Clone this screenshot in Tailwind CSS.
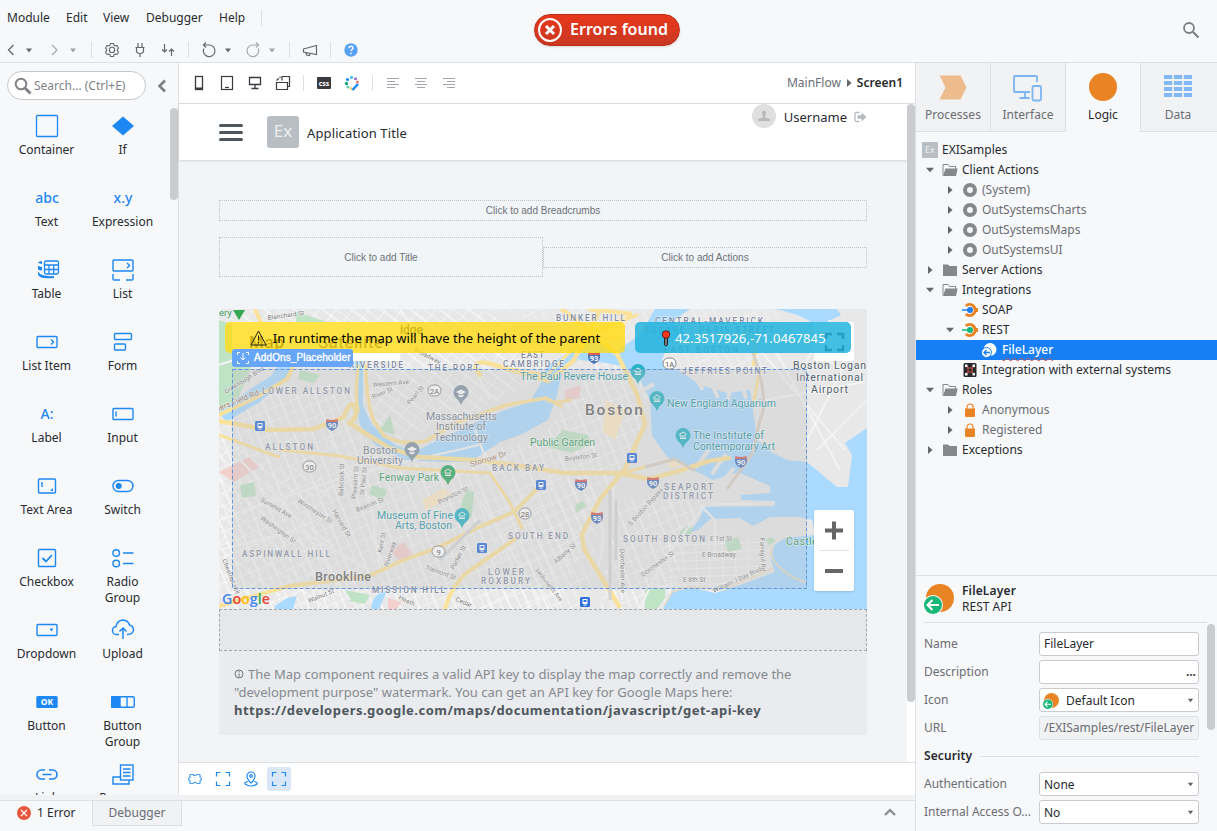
<!DOCTYPE html>
<html lang="en">
<head>
<meta charset="utf-8">
<title>EXISamples</title>
<script src="https://cdn.jsdelivr.net/npm/@tailwindcss/browser@4"></script>
</head>
<body class="bg-[#f7f8fa] font-['Noto_Sans',sans-serif] text-[12px] leading-4 text-[#272b30] overflow-hidden">
<svg class="hidden">
  <symbol id="caret" viewBox="0 0 8 5"><path d="M1 .5h6L4 4.500z" fill="currentColor"/></symbol>
  <symbol id="tri-r" viewBox="0 0 6 8"><path d="M1 0v8l4.500-4z" fill="#63666c"/></symbol>
  <symbol id="tri-d" viewBox="0 0 8 6"><path d="M0 .7h8L4 5.200z" fill="#63666c"/></symbol>
  <symbol id="folder-open" viewBox="0 0 16 14"><path d="M1 12.500V1.500h5l1.500 2H13.500V6" fill="none" stroke="#85878b"/><path d="M1 13 3.500 5.500H15.700L14 13z" fill="#85878b"/></symbol>
  <symbol id="folder" viewBox="0 0 16 14"><path d="M1 1.500h5l1.500 1.500H15v10H1z" fill="#85878b"/></symbol>
  <symbol id="ring" viewBox="0 0 14 14"><circle cx="7" cy="7" r="5" fill="none" stroke="#85878b" stroke-width="4"/></symbol>
  <symbol id="lock" viewBox="0 0 12 14"><path d="M3 6V4a3 3 0 0 1 6 0v2" fill="none" stroke="#e98424" stroke-width="1.200"/><path d="M1 5.500h10v7.500q0 1-1 1H2q-1 0-1-1z" fill="#e98424"/></symbol>
  <symbol id="rest" viewBox="0 0 30 30"><circle cx="16" cy="14" r="14" fill="#e98424"/><circle cx="9" cy="21" r="10" fill="#f7f8fa"/><circle cx="9" cy="21" r="9" fill="#17b877"/><path d="M15 21H4M8.500 16 3.500 21l5 5" fill="none" stroke="#fff" stroke-width="2"/></symbol>
  <symbol id="corners" viewBox="0 0 16 16"><path d="M1.500 5.500v-4h4M10.500 1.500h4v4M14.500 10.500v4h-4M5.500 14.500h-4v-4" fill="none" stroke="currentColor" stroke-width="1.200"/></symbol>
</svg>
<div class="flex h-[831px] w-[1217px] flex-col">

<header class="flex h-[63px] shrink-0 justify-between border-b border-[#dddfe2]">
  <div class="w-[534px]">
    <nav class="flex h-9 items-center pl-[7px]">
      <span class="w-[59px]">Module</span><span class="w-[37px]">Edit</span><span class="w-[43px]">View</span><span class="w-[73px]">Debugger</span><span class="w-[42px]">Help</span><i class="h-4 w-px bg-[#dfe0e4]"></i>
    </nav>
    <div class="mt-1 flex h-5 items-center text-[#65686e]">
      <svg class="h-5 w-[22px]" viewBox="0 0 22 20" fill="none" stroke="currentColor" stroke-width="1.300"><path d="m13.500 5-5 5 5 5"/></svg>
      <svg class="mx-[3px] h-[5px] w-2"><use href="#caret"/></svg>
      <svg class="ml-[10px] h-5 w-[18px] text-[#a8aab0]" viewBox="0 0 18 20" fill="none" stroke="currentColor" stroke-width="1.300"><path d="m6 5 5 5-5 5"/></svg>
      <svg class="mx-[5px] h-[5px] w-2 text-[#a0a2a7]"><use href="#caret"/></svg>
      <i class="ml-[9px] h-4 w-px bg-[#dfe0e4]"></i>
      <svg class="ml-[10px] h-5 w-5" viewBox="0 0 20 20" fill="none" stroke="currentColor" stroke-width="1.100"><path d="M8.500 3.500h3l.5 1.700 1.300.7 1.700-.4 1.500 2.600-1.200 1.200v1.400l1.200 1.200-1.500 2.600-1.700-.4-1.300.7-.5 1.700h-3L8 14.800l-1.300-.7-1.700.4-1.500-2.600 1.200-1.200V9.300L3.500 8.100 5 5.500l1.700.4L8 5.200z" stroke-linejoin="round"/><circle cx="10" cy="10" r="2.700"/></svg>
      <svg class="ml-2 h-5 w-5" viewBox="0 0 20 20" fill="none" stroke="currentColor" stroke-width="1.200"><path d="M8 3v4M12 3v4M5.500 7.500h9M6.500 7.500v3q0 3 3.500 3t3.500-3v-3M10 13.500V17"/></svg>
      <svg class="ml-2 h-5 w-5" viewBox="0 0 20 20" fill="none" stroke="currentColor" stroke-width="1.200"><path d="M6.500 4v8M4 9.500l2.500 2.500L9 9.500M13.500 16V9M11 11.500 13.500 9l2.500 2.500"/></svg>
      <i class="ml-[10px] h-4 w-px bg-[#dfe0e4]"></i>
      <svg class="ml-[10px] h-5 w-5" viewBox="0 0 20 20" fill="none" stroke="currentColor" stroke-width="1.200"><path d="M4.800 8.500A5.800 5.800 0 1 0 10.500 5H4.500M7 2.500 4.500 5 7 7.500"/></svg>
      <svg class="mx-[5px] h-[5px] w-2"><use href="#caret"/></svg>
      <svg class="ml-[6px] h-5 w-5 text-[#a8aab0]" viewBox="0 0 20 20" fill="none" stroke="currentColor" stroke-width="1.200"><path d="M15.200 8.500A5.800 5.800 0 1 1 9.500 5h6M13 2.500 15.500 5 13 7.500"/></svg>
      <svg class="mx-[5px] h-[5px] w-2 text-[#a0a2a7]"><use href="#caret"/></svg>
      <i class="ml-2 h-4 w-px bg-[#dfe0e4]"></i>
      <svg class="ml-[10px] h-5 w-5" viewBox="0 0 20 20" fill="none" stroke="currentColor" stroke-width="1.200"><path d="M3.500 9 16.500 5.500v9L3.500 12zM6 12.500l.6 2.500 3 .5.400-1.800"/></svg>
      <i class="ml-[10px] h-4 w-px bg-[#dfe0e4]"></i>
      <svg class="ml-[10px] h-5 w-5" viewBox="0 0 20 20"><circle cx="10" cy="10" r="6.700" fill="#56a1f5"/><path d="M8 8.200q.1-2 2-2t2 1.800q0 1-1.100 1.600-.9.500-.9 1.500" fill="none" stroke="#fff" stroke-width="1.400"/><circle cx="10" cy="13.300" r=".9" fill="#fff"/></svg>
    </div>
  </div>
  <div class="mt-[14px] flex h-8 w-[146px] items-center gap-2 rounded-full border border-[#bc2d19] bg-linear-to-b from-[#e8371a] to-[#c93822] pl-[3px] text-[16px] font-semibold text-white shadow-sm">
    <svg class="h-6 w-6 shrink-0" viewBox="0 0 24 24" fill="none" stroke="#fff"><circle cx="12" cy="12" r="11" stroke-width="2"/><path d="m8 8 8 8M16 8l-8 8" stroke-width="3"/></svg>
    <span class="-mt-[3px] whitespace-nowrap tracking-[.04px]">Errors found</span>
  </div>
  <div class="flex w-[537px] justify-end pr-[17px] pt-[21px]">
    <svg class="h-[18px] w-[18px]" viewBox="0 0 18 18" fill="none" stroke="#7c7f84"><circle cx="7" cy="7" r="5" stroke-width="1.800"/><path d="m11 11 5.500 5.500" stroke-width="2.200"/></svg>
  </div>
</header>

<div class="flex h-[768px]">
<div class="w-[915px] shrink-0">
  <div class="flex h-[732px]">
    <aside class="flex h-[732px] w-[179px] flex-col border-r border-[#dddfe2]">
      <div class="flex h-[45px] shrink-0 items-center pl-[7px]">
        <div class="flex h-[29px] w-[139px] items-center rounded-full border border-[#c5c7cb] bg-white pl-1.5 text-[#808388]">
          <svg class="mr-[2px] h-[18px] w-[18px]" viewBox="0 0 18 18" fill="none" stroke="#808388"><circle cx="7" cy="7" r="5.300" stroke-width="2"/><path d="m11 11 5.500 5.500" stroke-width="3"/></svg>Search... (Ctrl+E)
        </div>
        <svg class="ml-[10px] h-4 w-3" viewBox="0 0 12 16" fill="none" stroke="#7d8187" stroke-width="2.600"><path d="M9 2.500 3.500 8 9 13.500"/></svg>
      </div>
      <div class="flex h-[687px] justify-between overflow-hidden">
        <div class="ml-[9px] grid w-[152px] auto-rows-[72px] grid-cols-2 text-center text-[#1d87f3] [&_span]:-mt-[2px] [&_span]:-ml-px [&_span]:text-[#272b30] [&>div]:flex [&>div]:flex-col [&>div]:items-center [&_svg]:my-[5px] [&_svg]:h-[26px] [&_svg]:w-[26px] [&_svg]:shrink-0 [&_b]:flex [&_b]:h-9 [&_b]:shrink-0 [&_b]:items-center [&_b]:text-[14px] [&_b]:font-medium">
          <div><svg viewBox="0 0 26 26" fill="none" stroke="currentColor" stroke-width="1.300"><rect x="2.500" y="2.500" width="21" height="21" rx="1"/></svg><span>Container</span></div>
          <div><svg viewBox="0 0 26 26" fill="currentColor"><path d="m13 3.500 11 9.500-11 9.500L2 13z"/></svg><span>If</span></div>
          <div><b>abc</b><span>Text</span></div>
          <div><b>x.y</b><span>Expression</span></div>
          <div><svg viewBox="0 0 26 26" fill="none" stroke="currentColor" stroke-width="1.300"><rect x="10.500" y="4" width="14" height="13" rx="1.500"/><path d="M10.500 8h14M10.500 12.500h14M15 8v9M19.700 8v9"/><path d="M4 5.500q1.500 1.200 4 1.500v-3q-3 .3-4 1.500zM4 8.500v4q1.500 1 4 1v-3.500q-3-.3-4-1.500zM4 14.500v3q2 5 16 3.500v-2q-13 1-16-4.500z" fill="currentColor" stroke="none"/></svg><span>Table</span></div>
          <div><svg viewBox="0 0 26 26" fill="none" stroke="currentColor" stroke-width="1.400"><rect x="3" y="3" width="20" height="11" rx="1"/><path d="m17 6 2.500 2.500L17 11" /><path d="M3 17v5q0 1 1 1h6M23 17v5q0 1-1 1h-6"/></svg><span>List</span></div>
          <div><svg viewBox="0 0 26 26" fill="none" stroke="currentColor" stroke-width="1.400"><rect x="3" y="7.500" width="20" height="11" rx="1"/><path d="m17 10.500 2.500 2.500-2.500 2.500"/></svg><span>List Item</span></div>
          <div><svg viewBox="0 0 26 26" fill="none" stroke="currentColor" stroke-width="1.400"><rect x="4.500" y="4.500" width="17" height="6" rx="1"/><rect x="4.500" y="15" width="11" height="6" rx="1"/></svg><span>Form</span></div>
          <div><b>A:</b><span>Label</span></div>
          <div><svg viewBox="0 0 26 26" fill="none" stroke="currentColor" stroke-width="1.400"><rect x="3" y="7.500" width="20" height="11" rx="1"/><path d="M6 10.500v5"/></svg><span>Input</span></div>
          <div><svg viewBox="0 0 26 26" fill="none" stroke="currentColor" stroke-width="1.400"><rect x="4.500" y="6" width="17" height="14" rx="1"/><path d="M8 9v5"/><path d="m19 15v3h-3z" fill="currentColor" stroke="none"/></svg><span>Text Area</span></div>
          <div><svg viewBox="0 0 26 26" fill="none" stroke="currentColor" stroke-width="1.400"><rect x="3" y="7.500" width="20" height="11" rx="5.500"/><circle cx="8.700" cy="13" r="3" fill="currentColor" stroke="none"/></svg><span>Switch</span></div>
          <div><svg viewBox="0 0 26 26" fill="none" stroke="currentColor" stroke-width="1.400"><rect x="4.500" y="4.500" width="17" height="17" rx="1"/><path d="m8.500 13 3.500 3.500 6-6.500" stroke-width="1.800"/></svg><span>Checkbox</span></div>
          <div><svg viewBox="0 0 26 26" fill="none" stroke="currentColor" stroke-width="1.400"><circle cx="6.200" cy="8" r="3.300"/><circle cx="6.200" cy="18.500" r="3.300"/><path d="M13 8h10.500M13 18.500h10.500"/></svg><span>Radio<br>Group</span></div>
          <div><svg viewBox="0 0 26 26" fill="none" stroke="currentColor" stroke-width="1.400"><rect x="3" y="7.500" width="20" height="11" rx="1"/><path d="M15.500 11.500h4l-2 3z" fill="currentColor" stroke="none"/></svg><span>Dropdown</span></div>
          <div><svg viewBox="0 0 26 26" fill="none" stroke="currentColor" stroke-width="1.500"><path d="M9 17.500H7a4 4 0 0 1-1-8q1-6 7-6.500 5 .3 6.500 5 4 1 4 5-.5 4.500-6.500 4.500M13 22V11.500M9.500 14.500 13 11l3.500 3.500"/></svg><span>Upload</span></div>
          <div><svg viewBox="0 0 26 26"><rect x="2.300" y="7" width="21.400" height="12" rx="1.500" fill="currentColor"/><text x="13" y="16.200" text-anchor="middle" font-size="8.500" font-weight="700" fill="#fff">OK</text></svg><span>Button</span></div>
          <div><svg viewBox="0 0 26 26" fill="none" stroke="currentColor" stroke-width="1.400"><rect x="1.700" y="7.700" width="22.600" height="10.600" rx="1.500"/><path d="M1.700 8h8.300v10H1.700z" fill="currentColor"/><path d="M17 8v10"/></svg><span>Button<br>Group</span></div>
          <div><svg viewBox="0 0 26 26" fill="none" stroke="currentColor" stroke-width="1.600"><path d="M11 9H7.500a4.500 4.500 0 0 0 0 9H11M15 9h3.500a4.500 4.500 0 0 1 0 9H15M8.500 13.500h9"/></svg><span>Link</span></div>
          <div><svg viewBox="0 0 26 26" fill="none" stroke="currentColor" stroke-width="1.400"><rect x="10.500" y="4" width="12.500" height="15" /><path d="M10 16H3v7h16v-4M13 8h7.500M13 11.500h7.500M13 15h7.500"/></svg><span>Popover</span></div>
        </div>
        <i class="h-[92px] w-2 rounded-full bg-[#cbccd0]"></i>
      </div>
    </aside>

    <main class="w-[736px] bg-white">
      <div class="flex h-[41px] items-center border-b border-[#dddfe2] text-[#3a3b40] [&>svg]:h-5 [&>svg]:w-5">
        <svg class="ml-[10px]" viewBox="0 0 20 20" fill="none" stroke="currentColor" stroke-width="1.300"><rect x="6.500" y="3.500" width="7" height="13"/><path d="M6.500 15.500h7" stroke-width="2"/></svg>
        <svg class="ml-2" viewBox="0 0 20 20" fill="none" stroke="currentColor" stroke-width="1.200"><rect x="4.500" y="3.500" width="11" height="13"/><path d="M8 14.500h4"/></svg>
        <svg class="ml-2" viewBox="0 0 20 20" fill="none" stroke="currentColor" stroke-width="1.300"><path d="M4.500 4.500h11v7h-11zM10 12v3.500M6.500 15.500h7"/></svg>
        <svg class="ml-2" viewBox="0 0 20 20" fill="none" stroke="currentColor" stroke-width="1.200"><path d="M3.500 9.500h11v7h-11zM9 7.500v-4h7.500v10h-1.500"/><path d="M3.500 7.500 7.500 4" stroke-dasharray="3 1"/></svg>
        <i class="ml-[10px] h-4 w-px bg-[#dfe0e4]"></i>
        <svg class="ml-[10px]" viewBox="0 0 20 20"><rect x="3" y="4" width="14" height="12" rx="1" fill="#393a3f"/><text x="10" y="12.500" text-anchor="middle" font-size="7" font-weight="700" fill="#fff">css</text></svg>
        <svg class="ml-2" viewBox="0 0 20 20"><circle cx="9.500" cy="4.500" r="1.700" fill="#55c3f5"/><circle cx="13.500" cy="5.800" r="1.500" fill="#8d6bd0"/><circle cx="15.500" cy="9" r="1.500" fill="#f0776b"/><circle cx="5.500" cy="6.500" r="1.600" fill="#1d87f3"/><circle cx="4.500" cy="10.500" r="1.700" fill="#15a07b"/><circle cx="6" cy="14" r="1.600" fill="#67cfb0"/><circle cx="9" cy="15.500" r="1.300" fill="#f5cb5c"/><path d="m10.500 17 5.500-6" stroke="#1d87f3" stroke-width="2.500"/></svg>
        <i class="ml-[10px] h-4 w-px bg-[#dfe0e4]"></i>
        <svg class="ml-[10px]" viewBox="0 0 20 20" stroke="#a3a6ac"><path d="M4 5.500h12M4 8.500h8M4 11.500h12M4 14.500h8"/></svg>
        <svg class="ml-2" viewBox="0 0 20 20" stroke="#a3a6ac"><path d="M4 5.500h12M6 8.500h8M4 11.500h12M6 14.500h8"/></svg>
        <svg class="ml-2" viewBox="0 0 20 20" stroke="#a3a6ac"><path d="M4 5.500h12M8 8.500h8M4 11.500h12M8 14.500h8"/></svg>
        <div class="ml-auto flex items-center gap-[5px] pr-3 text-[#6a6d73]">MainFlow <svg class="h-2 w-1.5"><use href="#tri-r"/></svg><span class="font-semibold text-[#26292d]">Screen1</span></div>
      </div>
      <div class="flex h-[658px] bg-white">
        <div class="w-[728px] bg-[#f1f5f8]">
          <div class="flex h-[56px] items-center bg-white pl-10 pr-10 text-[13px] shadow-sm">
            <div class="flex h-[17px] w-6 flex-col justify-between"><i class="h-[3px] rounded-full bg-[#4f575e]"></i><i class="h-[3px] rounded-full bg-[#4f575e]"></i><i class="h-[3px] rounded-full bg-[#4f575e]"></i></div>
            <div class="ml-6 flex h-8 w-8 items-center justify-center rounded-[3px] bg-[#b8bec3] pb-0.5 text-[17px] text-[#eef0f2]">Ex</div>
            <span class="ml-2 pt-0.5 tracking-[.12px]">Application Title</span>
            <div class="-mr-px mb-8 ml-auto flex items-center">
              <svg class="h-6 w-6" viewBox="0 0 24 24"><circle cx="12" cy="12" r="12" fill="#dfdfdf"/><path d="M12 6.500q2 0 2 2.500 0 1.500-1 3v1.500l5 1.500v2H6v-2l5-1.500V12q-1-1.500-1-3 0-2.500 2-2.500z" fill="#b9b9b9"/></svg>
              <span class="ml-2 pt-0.5">Username</span>
              <svg class="mr-px ml-[7px] mt-0.5 h-3 w-[13px]" viewBox="0 0 13 12"><path d="M5.500 1.500H2.500q-1.500 0-1.500 1.500v6q0 1.500 1.500 1.500h3" fill="none" stroke="#b6bbc0" stroke-width="1.300"/><path d="M3.500 4.200h4V1.500L12.500 6 7.500 10.500V7.800h-4z" fill="#b6bbc0"/></svg>
            </div>
          </div>
          <div class="px-10 pt-10 font-['Liberation_Sans',sans-serif] text-[10px] text-[#6d7176]">
            <div class="flex h-[21px] items-center justify-center border border-dotted border-[#c0c3c6]">Click to add Breadcrumbs</div>
            <div class="mt-4 flex h-10 items-center">
              <div class="flex h-10 w-1/2 items-center justify-center border border-dotted border-[#c0c3c6] pt-0.5">Click to add Title</div>
              <div class="flex h-[21px] w-1/2 items-center justify-center border border-dotted border-[#c0c3c6] pt-px">Click to add Actions</div>
            </div>
            <div class="relative mt-8 h-[300px]">
              <svg class="h-[300px] w-[648px]" viewBox="219 309 648 300" font-family="Roboto,sans-serif">
                <defs>
                  <pattern id="st1" width="17" height="12" patternUnits="userSpaceOnUse" patternTransform="rotate(-22)"><path d="M0 0h17M0 0v12M8 0v12" stroke="#fff" stroke-width="1" fill="none"/></pattern>
                  <pattern id="st2" width="13" height="18" patternUnits="userSpaceOnUse" patternTransform="rotate(38)"><path d="M0 0h13M0 0v18M0 9h13" stroke="#fff" stroke-width="1" fill="none"/></pattern>
                  <pattern id="st3" width="13" height="8" patternUnits="userSpaceOnUse" patternTransform="rotate(-2)"><path d="M0 0h13M0 0v8" stroke="#fff" stroke-width="1" fill="none"/></pattern>
                  <pattern id="st4" width="20" height="9" patternUnits="userSpaceOnUse" patternTransform="rotate(63)"><path d="M0 0h20M0 0v9" stroke="#fff" stroke-width="1.100" fill="none"/></pattern>
                  <g id="train"><rect x="-5" y="-5" width="10" height="10" rx="1.500" fill="#2f6fdc"/><path d="M-2.500-3h5v5h-5zM-2 3.500l1-1h2l1 1" fill="#fff"/><path d="M-1.500-2h3v2h-3z" fill="#2f6fdc"/></g>
                  <g id="shield"><path d="M-6-4.500q6 2 12 0v3q0 5-6 7.500-6-2.500-6-7.500z" fill="#4a75bd"/><path d="M-5.500-6q5.500 2 11 0l.5 3H-6z" fill="#d65f56"/></g>
                  <g id="pin"><path d="M0 11Q-2 6-6 3A7.500 7.500 0 1 1 6 3Q2 6 0 11z"/><path d="M-3-1V-3L0-5l3 2v1M-3 1.500h6M-2-2v3M0-2v3M2-2v3" stroke="#fff" stroke-width=".9" fill="none"/></g>
                  <g id="grad"><path d="M0 11Q-2 6-6 3A7.500 7.500 0 1 1 6 3Q2 6 0 11z"/><path d="M-5-2 0-4.500 5-2 0 .5zM-2.500.2v2L0 3.500l2.500-1.300v-2L0 1.500z" fill="#fff"/></g>
                </defs>
                <rect x="219" y="309" width="648" height="300" fill="#e8e8e8"/>
                <path d="M219 309H480L540 340 545 375 480 410 400 440 365 420 360 365 300 340 219 400z" fill="url(#st2)"/>
                <path d="M219 400 360 380 362 440 400 465 540 440 610 340 650 380 640 440 600 500 560 609H219z" fill="url(#st1)"/>
                <path d="M219 440 330 480 340 609H219z" fill="url(#st2)" opacity=".7"/>
                <path d="M540 470 600 490 590 609H480L500 520z" fill="url(#st4)"/>
                <path d="M615 500 700 500 670 609H600z" fill="url(#st1)"/>
                <path d="M670 540h105l-5 30-60 25-65-5z" fill="url(#st3)"/>
                <path d="M480 309H780V360L740 385 670 365 600 330z" fill="url(#st4)" opacity=".7"/>
                <g fill="#bfe3c5"><path d="M219 320l22 8 10 40-15 35-17 10z"/><path d="M297 312l30 10-5 10-27-5zM300 370l20 5-6 8-16-4zM240 485l14-3 2 14-14 2zM372 485l15 5-4 10-14-6zM466 490l8 2-2 24-8 8-6-8z"/><path d="M563 430l25 5 3 9-20 9-24-6zM645 589l20-1 0 10-8 11h-12zM680 531l8-6 6 4-4 6-10 2zM725 541l13-4 4 12-14 3zM765 540l7-3 4 4-7 4zM345 590l25 5-5 9-15-3zM575 505l8-4 3 5-10 7zM380 430l10-15 5 20z"/></g>
                <g fill="#fbe9c4"><path d="M580 330l50-15-10 25-30 6zM422 500l22-12 10 8-28 14zM662 440l20 6 8 18-20 4zM605 400l20 10-10 30-12-8z"/></g>
                <g fill="#f4d0cd"><path d="M219 472l30-15 10 10-25 15zM565 390l16-4-2 12-14 3zM390 550l14-8 8 12-12 8zM388 598l14 4-6 7h-8z"/></g>
                <g fill="#aadaff">
                  <path d="M219 412l30-22 22-14 20-30 8 2-14 32-25 22-34 20z"/>
                  <path d="M363 335v70l9 20 23 20 20 7 17-9 38-18 35-15 25-8 10-17 8-20 27-15 5 8-18 14-5 23-9 25-28 15-20 7-30 20h-30l-35-2-30-15-15-20-5-25v-60z"/>
                  <path d="M575 345 590 338 615 352 640 335 655 309 690 309 672 322 685 335 668 345 662 360 670 367 683 373 700 385 727 393 750 390 753 410 757 440 773 453 787 460 807 462 837 487 848 487 852 455 845 443 867 428 V609 H663 L672 590 693 588 715 593 740 585 775 572 771 560 774 545 785 538 815 535 812 520 800 517 770 517 753 526 740 518 710 519 L698 530 690 532 700 518 704 507 775 506 775 501 742 500 740 495 770 493 770 486 738 472 713 480 683 465 668 458 652 436 650 400 640 380 622 366 600 362 580 360z"/>
                  <path d="M775 309h62l4 6-24 12q-12-12-42-18zM275 606l12-8 10-2-4 13h-18zM373 600l6-7 8-2-8 18h-8z"/>
                </g>
                <path d="M772 545q-6 22 34 38M773 568l-50 22-35-3-16 5-8 14" fill="none" stroke="#ecdcc0" stroke-width="1.500"/>
                <path d="M695 376l8 14M710 380l8 18M730 390l-2 10M742 385l4 14M640 392l14-8M645 405l12-4M695 468l14-18M712 474l14-20M726 478l8-10" stroke="#e8e8e8" stroke-width="4"/>
                <path d="M770 340l70 130M780 330l62 40-40 80M765 400l100-18M760 350l85 100M867 400l-50 50M790 390l40-70" stroke="#f4f4f4" stroke-width="1.800" fill="none"/>
                <g fill="none" stroke="#f3f3f3" stroke-width="2.200"><path d="M219 365l60-20M219 520l130-45 130-30M330 440l40 60 10 70M400 309l60 90M470 360l20 40M700 505l15 15v40M705 505l-45 60-20 44M612 480l10 120M480 500l60 100M350 600l-60-90-50-50M595 575q20-50-10-80M219 550l80-20 70 40M475 430l15 40M715 504h40"/></g>
                <g fill="none" stroke="#fbe29a" stroke-linecap="round" stroke-linejoin="round">
                  <path d="M255 309q10 25 20 30 30 10 12 40l-30 18-38 18" stroke-width="4"/>
                  <path d="M219 421l50 9 45-1 30-12q5-16 10-12 6 12-5 18l40 25 30 9 55 3 40 5 50 8h55l30 6 30-8 30-10 20-3" stroke-width="4.500"/>
                  <path d="M358 366q-3 30 0 45M366 366q0 35 8 55l10 15q20 10 42 5l30-18 50-18 40-7 15 8" stroke-width="3.500"/>
                  <path d="M280 450l60 6 60 12 90 5 20 30 12 25M219 435l60 22" stroke-width="3"/>
                  <path d="M219 606l70-20 80-10 30-14 40-15 40-20 35-15 25-25M445 609q5-20 20-35l50-35" stroke-width="4"/>
                  <path d="M480 375q-12-15 8-12l60 18 25-20 15-25 12-27M562 309l30 25 25 20 20 40 8 30-20 45-25 30-18 35 2 15 35 57M590 309l40 5" stroke-width="4.500"/>
                  <path d="M570 400q-20 5-25-2M760 370l-6 30M745 330q15 10 8 35M615 475l30-8M637 315l-50 20-40 40-35-6" stroke-width="3"/>
                </g>
                <path d="M752 350q18 50 8 70l-8 34-25 35M645 467l30-8 20 12" fill="none" stroke="#d7cfc4" stroke-width="3"/>
                <g fill="none" stroke="#d2d4d6" stroke-width="3"><path d="M610 490v110M616 500v60M480 520l-40 40"/></g>
                <path d="M233 310h12l-6 10z" fill="#34a853"/>
                <use href="#grad" x="461" y="394" fill="#8496a5"/><use href="#grad" x="412" y="451" fill="#8496a5"/>
                <use href="#pin" x="448" y="474" fill="#2fa764"/>
                <use href="#pin" x="462" y="517" fill="#27b3c6"/><use href="#pin" x="638" y="373" fill="#27b3c6"/><use href="#pin" x="657" y="400" fill="#27b3c6"/><use href="#pin" x="683" y="437" fill="#27b3c6"/>
                <use href="#train" x="260" y="426"/><use href="#train" x="482" y="548"/><use href="#train" x="541" y="485"/><use href="#train" x="632" y="458"/><use href="#train" x="585" y="602"/>
                <use href="#shield" x="332" y="425"/><use href="#shield" x="594" y="358"/><use href="#shield" x="581" y="485"/><use href="#shield" x="653" y="483"/><use href="#shield" x="741" y="462"/><use href="#shield" x="597" y="518"/>
                <g fill="#fff" font-size="7.500" font-weight="700" text-anchor="middle"><text x="332" y="428">90</text><text x="594" y="361">93</text><text x="581" y="488">90</text><text x="653" y="486">90</text><text x="741" y="465">90</text><text x="597" y="521">93</text></g>
                <g fill="#fff" stroke="#777" stroke-width=".9"><rect x="428" y="385" width="13" height="11" rx="5.500"/><rect x="663" y="358" width="13" height="11" rx="5.500"/><rect x="303" y="461" width="13" height="11" rx="5.500"/><rect x="519" y="508" width="12" height="11" rx="5.500"/><rect x="432" y="546" width="13" height="11" rx="5.500"/></g>
                <g fill="#555" font-size="7.500" text-anchor="middle"><text x="434.500" y="393.500">2A</text><text x="669.500" y="366.500">1A</text><text x="309.500" y="469.500">30</text><text x="525" y="516.500">28</text><text x="438.500" y="554.500">9</text></g>
                <g fill="#7a7a7a" font-size="6.500" stroke="#fff" stroke-width="1.500" stroke-opacity=".6" paint-order="stroke">
                  <text transform="translate(260 501)rotate(30)">Summit Ave</text><text transform="translate(260 519)rotate(36)">Washington St</text><text transform="translate(297 502)rotate(33)">Winchester St</text><text transform="translate(343 496)rotate(-88)">Babcock St</text><text transform="translate(356 499)rotate(-86)">Pleasant St</text><text transform="translate(364 495)rotate(-84)">St Paul St</text><text transform="translate(332 511)rotate(60)">Harvard St</text><text transform="translate(357 512)rotate(-22)">Beacon St</text><text transform="translate(439 504)rotate(-25)">Boylston St</text><text transform="translate(373 387)rotate(-5)">Western Ave</text><text transform="translate(373 399)rotate(-22)">River St</text><text transform="translate(410 405)rotate(-50)">Pearl St</text><text transform="translate(425 569)rotate(20)">Tremont St</text><text transform="translate(454 570)rotate(-62)">Parker St</text><text transform="translate(388 567)rotate(-72)">Riverway</text><text transform="translate(382 553)rotate(-80)">Kent St</text><text transform="translate(309 603)rotate(-22)">Walnut St</text><text transform="translate(222 560)rotate(68)">Chestnut Hill</text><text transform="translate(226 394)rotate(-32)">Greenough Blvd</text><text transform="translate(268 320)rotate(-8)">Blanchard St</text><text transform="translate(414 351)rotate(28)">Broadway</text>
                  <text transform="translate(535 570)rotate(52)" font-size="6">sachusetts Ave</text><text transform="translate(556 564)rotate(-42)">Albany St</text><text transform="translate(631 526)rotate(-48)">S Boston Bypass</text><text transform="translate(643 577)rotate(-36)">Dorchester St</text><text transform="translate(620 549)rotate(89)">Dorchester Ave</text><text transform="translate(760 538)rotate(88)">Farragut Rd</text><text x="710" y="541">E 1st St</text><text x="702" y="557">E Broadway</text><text x="683" y="582">E 8th St</text><text transform="translate(714 593)rotate(-25)">William J Day Blvd</text><text transform="translate(565 461)rotate(-7)">Boylston St</text><text transform="translate(398 599)rotate(25)">Heath</text><text transform="translate(455 601)rotate(22)">Cedar</text>
                </g>
                <g fill="#8088a0" font-size="8.200" font-weight="500" stroke="#fff" stroke-width="1.500" stroke-opacity=".5" paint-order="stroke">
                  <text x="262" y="394" textLength="88">LOWER ALLSTON</text><text x="265" y="450" textLength="48">ALLSTON</text><text x="349" y="368" textLength="54">RIVERSIDE</text><text x="428" y="371" textLength="51">THE PORT</text><text x="521" y="358" textLength="23">EAST</text><text x="503" y="367" textLength="61">CAMBRIDGE</text><text x="556" y="321" textLength="69">BUNKER HILL</text><text x="655" y="324" textLength="108">CENTRAL-MAVERICK</text><text x="644" y="333" textLength="130">SQUARE / PARIS STREET</text><text x="664" y="353" textLength="74">EAST BOSTON</text><text x="682" y="374" textLength="85">JEFFRIES POINT</text><text x="492" y="471" textLength="52">BACK BAY</text><text x="242" y="557" textLength="88">ASPINWALL HILL</text><text x="508" y="539" textLength="60">SOUTH END</text><text x="488" y="575" textLength="36">LOWER</text><text x="481" y="584" textLength="49">ROXBURY</text><text x="372" y="593" textLength="73">MISSION HILL</text><text x="664" y="490" textLength="49">SEAPORT</text><text x="663" y="499" textLength="50">DISTRICT</text><text x="623" y="542" textLength="82">SOUTH BOSTON</text>
                </g>
                <g stroke="#fff" stroke-width="1.500" stroke-opacity=".6" paint-order="stroke" font-size="10.500">
                  <g fill="#6f7d90"><text x="426" y="420" textLength="71">Massachusetts</text><text x="436" y="430" textLength="50">Institute of</text><text x="434" y="441" textLength="54">Technology</text><text x="363" y="454" textLength="34">Boston</text><text x="357" y="464" textLength="46">University</text></g>
                  <g fill="#1f93a3"><text x="520" y="380" textLength="108">The Paul Revere House</text><text x="667" y="407" textLength="109">New England Aquarium</text><text x="693" y="439" textLength="71">The Institute of</text><text x="693" y="450" textLength="82">Contemporary Art</text><text x="377" y="519" textLength="76">Museum of Fine</text><text x="395" y="529" textLength="57">Arts, Boston</text></g>
                  <g fill="#369a62"><text x="379" y="481" textLength="60">Fenway Park</text><text x="530" y="446" textLength="65">Public Garden</text><text x="786" y="545" textLength="38">Castle I</text></g>
                  <g fill="#50606c"><text x="793" y="369" textLength="73">Boston Logan</text><text x="796" y="381" textLength="67">International</text><text x="811" y="393" textLength="37">Airport</text></g>
                  <g fill="#9b7860" font-size="8"><text transform="translate(219 411)rotate(-22)">lers Field Rd</text><text transform="translate(471 467)rotate(-17)">Storrow Dr</text></g>
                </g>
                <g fill="#666" stroke="#fff" stroke-width="1.500" stroke-opacity=".6" paint-order="stroke" font-weight="500"><text x="585" y="415" font-size="15.500" textLength="58">Boston</text><text x="315" y="581" font-size="12.500" textLength="56">Brookline</text></g>
                <text x="219" y="316" font-size="9.500" fill="#3f9e6a">ery</text>
                <rect x="232.500" y="369.500" width="574" height="219" fill="#c0c0c0" fill-opacity=".3" stroke="#6696d8" stroke-dasharray="4 2"/>
                <g font-size="14.500" font-weight="600" font-family="'Open Sans',sans-serif"><text x="222" y="604" textLength="48" lengthAdjust="spacingAndGlyphs"><tspan fill="#4285f4">G</tspan><tspan fill="#ea4335">o</tspan><tspan fill="#fbbc05">o</tspan><tspan fill="#4285f4">g</tspan><tspan fill="#34a853">l</tspan><tspan fill="#ea4335">e</tspan></text></g>
                <path d="M232 322h168v39H232z" fill="#fff"/><rect x="814" y="322" width="40" height="39" rx="1" fill="#fff"/>
                <g font-size="17" fill="#000" font-weight="500"><text x="249" y="348" textLength="35">Map</text><text x="318" y="348" fill="#222" font-weight="400" textLength="65">Satellite</text><text x="400" y="334" font-size="12" fill="#333">idge</text></g>
                <path d="M826 339v-5h6M837 334h6v5M843 345v5h-6M832 350h-6v-5" fill="none" stroke="#222" stroke-width="2.500"/>
              </svg>
              <div class="absolute left-[6px] top-[13px] flex h-[31px] w-[400px] items-center justify-center rounded-[5px] bg-[#ffdb10]/78 text-black">
                <svg class="h-4 w-[17px]" viewBox="0 0 17 16" fill="none" stroke="#222"><path d="M8.500 1 16 15H1zM8.500 5.500v5M8.500 12v1.500"/></svg>
                <span class="ml-[6px] font-['Noto_Sans',sans-serif] text-[13px] tracking-[.05px] whitespace-nowrap">In runtime the map will have the height of the parent</span>
              </div>
              <div class="absolute left-[416px] top-[13px] flex h-[31px] w-[216px] items-center rounded-[5px] bg-[#22b4de]/85 pl-[26px] font-['Noto_Sans',sans-serif] text-[13px] tracking-[.1px] text-white">
                <svg class="mr-1 h-4 w-[10px]" viewBox="0 0 10 16"><rect x="3.500" y="6" width="3" height="9.500" rx="1" fill="#777" stroke="#222"/><circle cx="5" cy="4.500" r="3.800" fill="#f4361e" stroke="#4a1a10" stroke-width=".8"/></svg>42.3517926,-71.0467845
              </div>
              <div class="absolute left-[13px] top-[40px] flex h-[18px] w-[121px] items-center rounded-[3px] bg-[#66a5f8] pl-1 text-[10px] text-white">
                <svg class="mr-1 h-[14px] w-[14px]" viewBox="0 0 14 14" fill="none" stroke="#fff"><path d="M1.500 4V1.500H4M10 1.500h2.500V4M12.500 10v2.500H10M4 12.500H1.500V10M7 2v7M4.500 6.500 7 9l2.500-2.500"/></svg><span class="tracking-[.12px] [-webkit-text-stroke:.35px_white]">AddOns_Placeholder</span>
              </div>
              <div class="absolute left-[595px] top-[201px] flex h-[81px] w-10 flex-col items-center rounded-[2px] bg-white shadow-sm">
                <svg class="h-10 w-10" viewBox="0 0 40 40" stroke="#666" stroke-width="4"><path d="M11 20.500h18M20 11.500v18"/></svg><i class="h-px w-[30px] bg-[#e3e3e3]"></i><svg class="h-10 w-10" viewBox="0 0 40 40" stroke="#666" stroke-width="4"><path d="M11 20h18"/></svg>
              </div>
            </div>
            <div class="h-[42px] border border-dashed border-[#a5a7aa] bg-[#e6e7e9]"></div>
            <div class="h-[84px] bg-[#e9ebee] pl-[15px] pt-[14px] font-['Noto_Sans',sans-serif] text-[13px] leading-[18px] text-[#868a8e] whitespace-nowrap">
              <p class="flex items-center"><svg class="mr-1 h-[10px] w-[10px]" viewBox="0 0 10 10" fill="none" stroke="#777"><circle cx="5" cy="5" r="4"/><path d="M5 2v1.500M5 4.500v3.500"/></svg>The Map component requires a valid API key to display the map correctly and remove the</p>
              <p>"development purpose" watermark. You can get an API key for Google Maps here:</p>
              <p class="font-bold tracking-[.49px] text-[#4f575e]">https://developers.google.com/maps/documentation/javascript/get-api-key</p>
            </div>
          </div>
        </div>
        <i class="h-[598px] w-2 rounded-full bg-[#cbccd0]"></i>
      </div>
      <div class="flex h-[33px] items-center gap-1 border-t border-[#dddfe2] bg-white pl-1 text-[#1d87f3]">
        <span class="flex h-6 w-6 items-center justify-center"><svg class="h-4 w-4" viewBox="0 0 16 16" fill="none" stroke="#4a9ef2" stroke-width="1.200"><path d="M3 3.500h3q1.900 2 4 0h3v3q3 1.500 0 3.500v2.500h-3q-1.900-2.500-4 0H3V10q-3-1.700 0-3.500z" stroke-linejoin="round"/></svg></span>
        <span class="flex h-6 w-6 items-center justify-center"><svg class="h-4 w-4"><use href="#corners"/></svg></span>
        <span class="flex h-6 w-6 items-center justify-center"><svg class="h-4 w-4" viewBox="0 0 16 16" fill="none" stroke="currentColor" stroke-width="1.200"><path d="M8 12Q4 8 4 5a4 4 0 0 1 8 0q0 3-4 7zM5 10.500Q1 11.500 2 13q6 4 12 0 1-1.500-3-2.500"/><circle cx="8" cy="5" r="1.300"/></svg></span>
        <span class="flex h-6 w-6 items-center justify-center rounded-[3px] bg-[#d9e7f8]"><svg class="h-4 w-4"><use href="#corners"/></svg></span>
      </div>
    </main>
  </div>
  <footer class="flex h-9 bg-[#f1f2f4] pt-[5px]">
    <div class="flex w-[92px] items-center border-t border-[#dddfe2] bg-[#f7f8fa] pb-1.5 pl-[17px]"><svg class="mr-1.5 h-[14px] w-[14px]" viewBox="0 0 14 14"><circle cx="7" cy="7" r="7" fill="#e8553d"/><path d="m4 4 6 6M10 4l-6 6" stroke="#fff" stroke-width="1.200"/></svg>1 Error</div>
    <div class="flex flex-1 items-center justify-between border-t border-[#dddfe2] bg-[#f7f8fa] pb-[5px]">
      <div class="flex h-[25px] w-[90px] items-center justify-center border border-t-0 border-[#dddfe2] bg-[#f1f2f4] text-[#6a6d73]">Debugger</div>
      <svg class="mr-[18px] -mt-1 h-3 w-3.5" viewBox="0 0 14 12" fill="none" stroke="#85888d" stroke-width="2.200"><path d="m2 9 5-5 5 5"/></svg>
    </div>
  </footer>
</div>

<section class="w-[302px] border-l border-[#dddfe2]">
  <div class="flex h-[69px] text-center text-[#6a6d73] [&>div]:flex [&>div]:flex-col [&>div]:items-center [&>div]:pt-[9px] [&_svg]:mb-[3px] [&_svg]:h-8 [&_svg]:w-8">
    <div class="w-[75px] border-r border-b border-[#dddfe2] bg-[#f1f2f4]"><svg viewBox="0 0 32 32"><path d="M2.500 3.500h21l6 12-6 12h-21l6-12z" fill="#eebb8d"/></svg>Processes</div>
    <div class="w-[75px] border-r border-b border-[#dddfe2] bg-[#f1f2f4]"><svg viewBox="0 0 32 32" fill="none" stroke="#7db5f3" stroke-width="1.800"><path d="M25 10V5q0-1-1-1H3Q2 4 2 5v14q0 1 1 1h15M13 20v6M7.500 26h10" /><rect x="20.500" y="14" width="8.500" height="14.500" rx="1.500"/></svg>Interface</div>
    <div class="w-[74px] text-[#272b30]"><svg viewBox="0 0 32 32"><circle cx="16" cy="15" r="14" fill="#e98424"/></svg>Logic</div>
    <div class="w-[77px] border-l border-b border-[#dddfe2] bg-[#f1f2f4] pr-0.5"><svg viewBox="0 0 32 32" stroke="#80b9f5" stroke-width="4" stroke-dasharray="8.200 1.700"><path d="M2 5h28M2 11h28M2 17h28M2 23h28"/></svg>Data</div>
  </div>
  <div class="h-[443px] pt-2 text-[#272b30] [&>div]:flex [&>div]:h-5 [&>div]:items-center [&_.a]:mr-2.5 [&_.a]:h-2 [&_.a]:w-2 [&_.f]:mr-1 [&_.f]:h-[14px] [&_.f]:w-4">
    <div class="pl-1.5"><span class="mr-1 flex h-4 w-4 items-center justify-center bg-[#b8bec3] text-[9px] text-[#eef0f2]">Ex</span>EXISamples</div>
    <div class="pl-[10px]"><svg class="a"><use href="#tri-d" y="1" height="6"/></svg><svg class="f -ml-[2px]"><use href="#folder-open"/></svg>Client Actions</div>
    <div class="pl-[30px] text-[#6a6d73]"><svg class="a"><use href="#tri-r"/></svg><svg class="mr-[5px] -ml-px h-[14px] w-[14px]"><use href="#ring"/></svg>(System)</div>
    <div class="pl-[30px] text-[#6a6d73]"><svg class="a"><use href="#tri-r"/></svg><svg class="mr-[5px] -ml-px h-[14px] w-[14px]"><use href="#ring"/></svg>OutSystemsCharts</div>
    <div class="pl-[30px] text-[#6a6d73]"><svg class="a"><use href="#tri-r"/></svg><svg class="mr-[5px] -ml-px h-[14px] w-[14px]"><use href="#ring"/></svg>OutSystemsMaps</div>
    <div class="pl-[30px] text-[#6a6d73]"><svg class="a"><use href="#tri-r"/></svg><svg class="mr-[5px] -ml-px h-[14px] w-[14px]"><use href="#ring"/></svg>OutSystemsUI</div>
    <div class="pl-[10px]"><svg class="a"><use href="#tri-r"/></svg><svg class="f -ml-[2px]"><use href="#folder"/></svg>Server Actions</div>
    <div class="pl-[10px]"><svg class="a"><use href="#tri-d" y="1" height="6"/></svg><svg class="f -ml-[2px]"><use href="#folder-open"/></svg>Integrations</div>
    <div class="pl-[46px]"><svg class="mr-1 h-4 w-4" viewBox="0 0 16 16"><path d="M3.800 4A5.500 5.500 0 1 1 3.800 12" fill="none" stroke="#e98424" stroke-width="3"/><path d="M14 6h2v4h-2z" fill="#e98424"/><circle cx="8" cy="8" r="3" fill="#1d80f0"/><path d="M0 8h8" stroke="#1d80f0" stroke-width="1.500"/></svg>SOAP</div>
    <div class="pl-[30px]"><svg class="a"><use href="#tri-d" y="1" height="6"/></svg><svg class="-ml-[2px] mr-1 h-4 w-4" viewBox="0 0 16 16"><path d="M3.800 4A5.500 5.500 0 1 1 3.800 12" fill="none" stroke="#e98424" stroke-width="3"/><path d="M14 6h2v4h-2z" fill="#e98424"/><circle cx="8" cy="8" r="3" fill="#17b877"/><path d="M0 8h8" stroke="#17b877" stroke-width="1.500"/></svg>REST</div>
    <div class="bg-[#167ff5] pl-[65px] font-medium text-white"><svg class="mr-[5px] h-4 w-4" viewBox="0 0 16 16"><circle cx="9" cy="7.500" r="6.500" fill="#fff"/><circle cx="5.500" cy="10.500" r="5" fill="#fff" stroke="#167ff5"/><path d="M9 10.500H3M5.500 8 3 10.500 5.500 13" fill="none" stroke="#167ff5" stroke-width="1.300"/></svg><span class="underline decoration-[#d2544f] decoration-wavy decoration-1 underline-offset-[3px]">FileLayer</span></div>
    <div class="pl-[46px]"><svg class="mr-1 h-4 w-4" viewBox="0 0 16 16"><rect x="1.500" y="1" width="13" height="14" rx="1.500" fill="#25292e"/><path d="m4 4 8 8M12 4l-8 8" stroke="#b5493b" stroke-width="1.300"/><path d="M6 6h4v4H6z" fill="#25292e" stroke="#d2503f"/><path d="M3 2.500h2.500V5H3zM10.500 2.500H13V5h-2.500zM3 11h2.500v2.500H3zM10.500 11H13v2.500h-2.500z" fill="#fff"/></svg>Integration with external systems</div>
    <div class="pl-[10px]"><svg class="a"><use href="#tri-d" y="1" height="6"/></svg><svg class="f -ml-[2px]"><use href="#folder-open"/></svg>Roles</div>
    <div class="pl-[30px] text-[#6a6d73]"><svg class="a"><use href="#tri-r"/></svg><svg class="mr-1.5 h-[14px] w-3"><use href="#lock"/></svg>Anonymous</div>
    <div class="pl-[30px] text-[#6a6d73]"><svg class="a"><use href="#tri-r"/></svg><svg class="mr-1.5 h-[14px] w-3"><use href="#lock"/></svg>Registered</div>
    <div class="pl-[10px]"><svg class="a"><use href="#tri-r"/></svg><svg class="f -ml-[2px]"><use href="#folder"/></svg>Exceptions</div>
  </div>
  <div class="h-[256px] border-t border-[#dddfe2] pl-2">
    <div class="flex h-[47px] w-[283px] items-center gap-2 border-b border-[#dddfe2]"><svg class="h-[30px] w-[30px]"><use href="#rest"/></svg><div><b class="font-semibold tracking-[.15px]">FileLayer</b><br>REST API</div></div>
    <div class="flex justify-between pr-0.5">
      <div class="w-[275px] pt-[9px] text-[#6a6d73] [&_svg]:text-[#5d6066] [&>label]:mb-1 [&>label]:flex [&>label]:h-6 [&>label]:items-center [&>label]:justify-between [&_span]:flex [&_span]:h-6 [&_span]:w-[160px] [&_span]:items-center [&_span]:rounded-[3px] [&_span]:border [&_span]:border-[#c9cbcf] [&_span]:px-1 [&_span]:whitespace-nowrap">
        <label>Name<span class="bg-white text-[#272b30]">FileLayer</span></label>
        <label>Description<span class="justify-end bg-white !px-0.5 font-bold text-[#3d4045]">...</span></label>
        <label>Icon<span class="bg-white pt-px text-[#272b30]"><svg class="-ml-px mr-[7px] h-4 w-4"><use href="#rest"/></svg>Default Icon<svg class="ml-auto h-[5px] w-[7px]"><use href="#caret"/></svg></span></label>
        <label>URL<span class="bg-[#f1f2f4] !border-[#dddfe2]">/EXISamples/rest/FileLayer</span></label>
        <div class="mb-1 flex h-6 items-center gap-2 text-[#272b30]"><b class="font-semibold tracking-[.1px]">Security</b><i class="h-px flex-1 bg-[#dddfe2]"></i></div>
        <label>Authentication<span class="bg-white pt-px text-[#272b30]">None<svg class="ml-auto h-[5px] w-[7px]"><use href="#caret"/></svg></span></label>
        <label>Internal Access O...<span class="bg-white pt-px text-[#272b30]">No<svg class="ml-auto h-[5px] w-[7px]"><use href="#caret"/></svg></span></label>
      </div>
      <i class="mt-px h-[106px] w-2 rounded-full bg-[#cbccd0]"></i>
    </div>
  </div>
</section>
</div>
</div>
</body>
</html>
